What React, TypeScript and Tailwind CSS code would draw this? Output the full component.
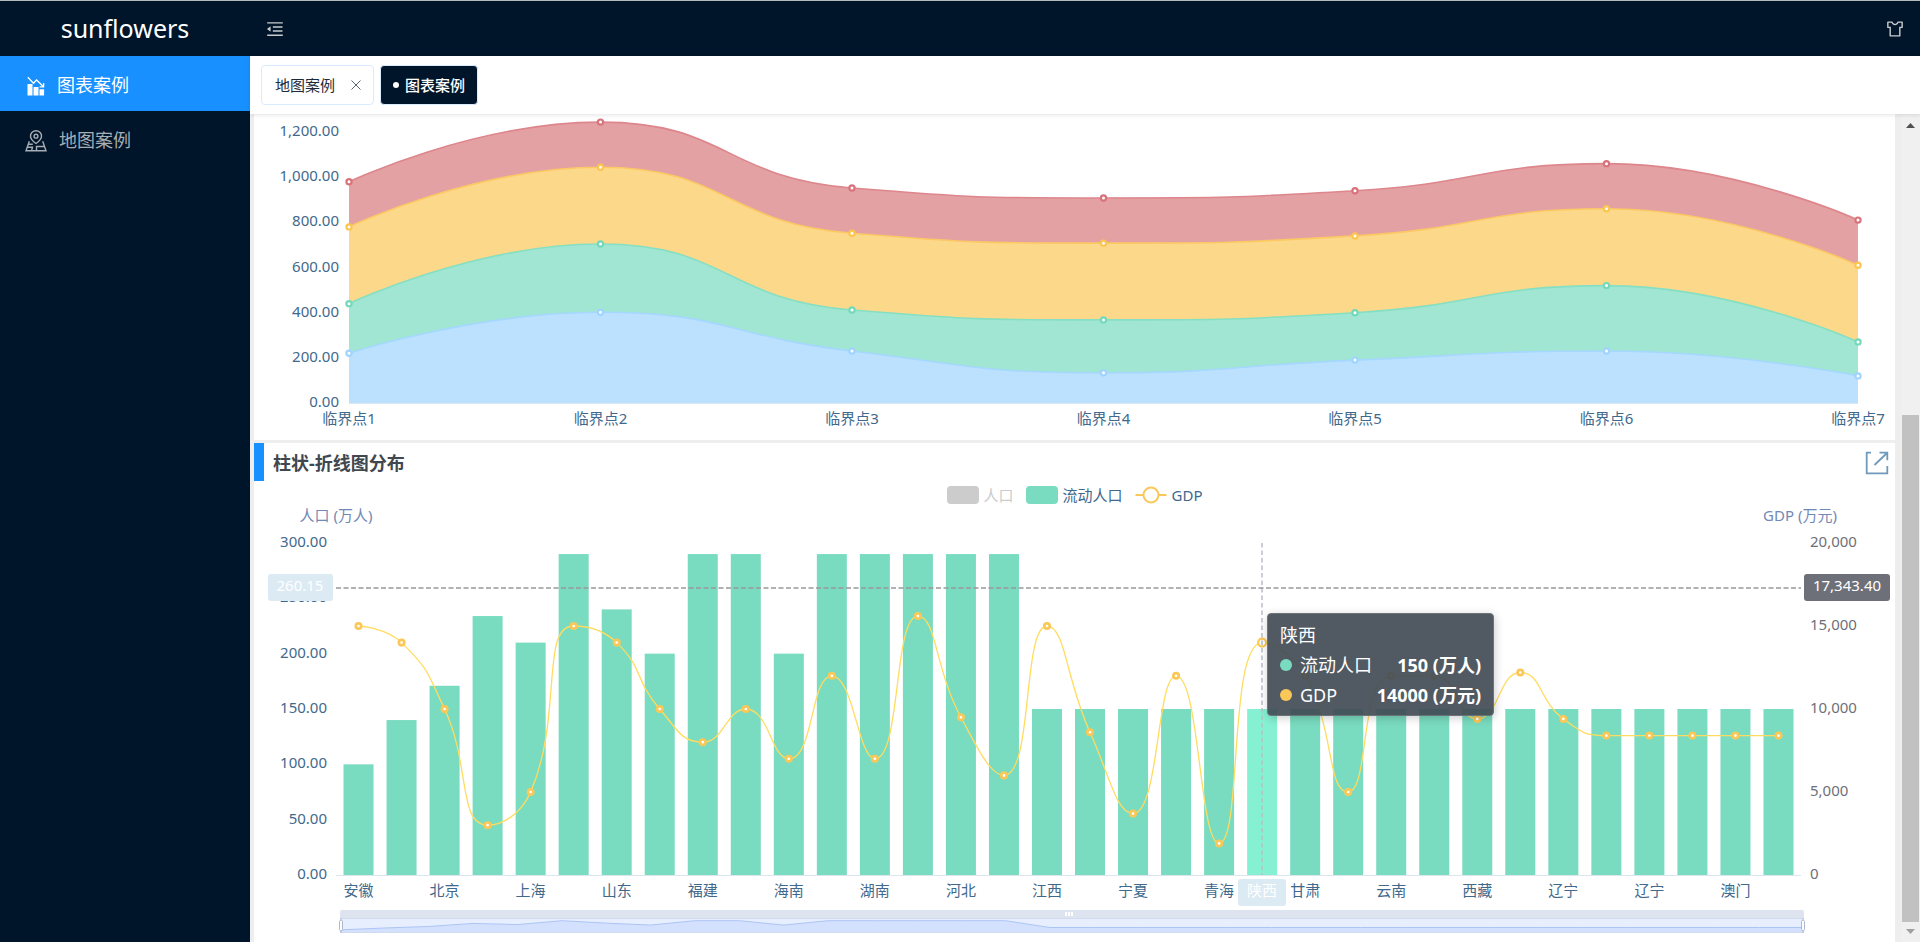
import { useLayoutEffect, useRef, useState } from 'react';
import type { RefObject } from 'react';
import { AiOutlineMenuFold, AiOutlineSkin } from 'react-icons/ai';

type Point = { x: number; y: number };

function useWidth(initial: number): [RefObject<HTMLDivElement | null>, number] {
  const ref = useRef<HTMLDivElement>(null);
  const [width, setWidth] = useState(initial);
  useLayoutEffect(() => {
    const node = ref.current;
    if (!node) return;
    const update = () => setWidth(node.clientWidth);
    update();
    const observer = new ResizeObserver(update);
    observer.observe(node);
    return () => observer.disconnect();
  }, []);
  return [ref, width];
}

const clamp = (v: number, a: number, b: number) => Math.max(Math.min(v, Math.max(a, b)), Math.min(a, b));

// Smooth bezier through all points; control points never overshoot their neighbours.
function smoothPath(pts: Point[], smooth = 0.5): string {
  let d = `M${pts[0].x} ${pts[0].y}`;
  let c0x = pts[0].x;
  let c0y = pts[0].y;
  for (let i = 1; i < pts.length; i++) {
    const prev = pts[i - 1];
    const p = pts[i];
    const next = pts[i + 1];
    let c1x = p.x;
    let c1y = p.y;
    let n0x = p.x;
    let n0y = p.y;
    if (next) {
      const lenPrev = Math.hypot(p.x - prev.x, p.y - prev.y);
      const lenNext = Math.hypot(next.x - p.x, next.y - p.y);
      const ratio = lenNext / (lenNext + lenPrev);
      n0x = clamp(p.x + (next.x - prev.x) * smooth * ratio, next.x, p.x);
      n0y = clamp(p.y + (next.y - prev.y) * smooth * ratio, next.y, p.y);
      c1x = clamp(p.x - ((n0x - p.x) * lenPrev) / lenNext, prev.x, p.x);
      c1y = clamp(p.y - ((n0y - p.y) * lenPrev) / lenNext, prev.y, p.y);
      n0x = p.x + ((p.x - c1x) * lenNext) / lenPrev;
      n0y = p.y + ((p.y - c1y) * lenNext) / lenPrev;
    }
    d += `C${c0x} ${c0y} ${c1x} ${c1y} ${p.x} ${p.y}`;
    c0x = n0x;
    c0y = n0y;
  }
  return d;
}

const areaSeries = [
  { name: 'red', fill: '#e4a1a4', line: '#dd868c', dot: '#d9737b', data: [980, 1244, 952, 908, 940, 1060, 810] },
  { name: 'yellow', fill: '#fcd88b', line: '#fbc964', dot: '#fbc550', data: [780, 1044, 752, 708, 740, 860, 610] },
  { name: 'green', fill: '#a0e6d2', line: '#85dfc3', dot: '#73d9ba', data: [440, 704, 412, 368, 400, 520, 270] },
  { name: 'blue', fill: '#bbe1ff', line: '#a5d7ff', dot: '#9fd4ff', data: [220, 402, 230, 134, 190, 230, 120] },
];
const areaTicks = ['0.00', '200.00', '400.00', '600.00', '800.00', '1,000.00', '1,200.00'];

function AreaChart() {
  const [ref, width] = useWidth(1641);
  const left = 95;
  const right = width - 37;
  const base = 289;
  const unit = 0.2258;
  const step = (right - left) / 6;
  const toPoints = (data: number[]) => data.map((v, i) => ({ x: left + i * step, y: base - v * unit }));
  return (
    <div ref={ref} className="w-full">
      <svg width={width} height={326} className="block" fontSize={15} role="img" aria-label="堆叠面积图">
        {areaSeries.map((s) => (
          <path key={s.name} d={`${smoothPath(toPoints(s.data))}L${right} ${base}L${left} ${base}Z`} fill={s.fill} />
        ))}
        <rect x={left} y={base} width={right - left} height={1} fill="#dce6ef" />
        {areaSeries.map((s) => (
          <path key={s.name} d={smoothPath(toPoints(s.data))} fill="none" stroke={s.line} strokeWidth={1.6} />
        ))}
        {areaSeries.map((s) =>
          toPoints(s.data).map((p, i) => (
            <circle key={`${s.name}-${i}`} cx={p.x} cy={p.y} r={2.6} fill="#fff" stroke={s.dot} strokeWidth={2.2} />
          )),
        )}
        <g fill="#41698c">
          {areaTicks.map((t, i) => (
            <text key={t} x={left - 10} y={base - i * 200 * unit + 4} textAnchor="end">
              {t}
            </text>
          ))}
          {areaSeries[0].data.map((_, i) => (
            <text key={i} x={left + i * step} y={310} textAnchor="middle">
              {`临界点${i + 1}`}
            </text>
          ))}
        </g>
      </svg>
    </div>
  );
}

const population = [
  100, 140, 171, 234, 210, 290, 240, 200, 290, 290, 200, 290, 290, 290, 290, 290, 150, 150, 150, 150, 150, 150, 150,
  150, 150, 150, 150, 150, 150, 150, 150, 150, 150, 150,
];
const gdp = [
  15000, 14000, 10000, 3000, 5000, 15000, 14000, 10000, 8000, 10000, 7000, 12000, 7000, 15600, 9500, 6000, 15000, 8600,
  3700, 12000, 1900, 14000, 12000, 5000, 12000, 12000, 9400, 12200, 9400, 8400, 8400, 8400, 8400, 8400,
];
const provinces: [number, string][] = [
  [0, '安徽'], [2, '北京'], [4, '上海'], [6, '山东'], [8, '福建'], [10, '海南'], [12, '湖南'], [14, '河北'],
  [16, '江西'], [18, '宁夏'], [20, '青海'], [22, '甘肃'], [24, '云南'], [26, '西藏'], [28, '辽宁'], [30, '辽宁'],
  [32, '澳门'],
];
const leftTicks = ['0.00', '50.00', '100.00', '150.00', '200.00', '250.00', '300.00'];
const rightTicks = ['0', '5,000', '10,000', '15,000', '20,000'];
const active = 21;

function BarLineChart() {
  const [ref, width] = useWidth(1641);
  const left = 83;
  const right = width - 95;
  const top = 36;
  const base = 368;
  const band = (right - left) / population.length;
  const cx = (i: number) => left + (i + 0.5) * band;
  const line = gdp.map((v, i) => ({ x: cx(i), y: base - (v / 20000) * (base - top) }));
  const activeX = Math.round(cx(active));

  const zoomLeft = 86;
  const zoomRight = width - 91;
  const zoomStep = (zoomRight - zoomLeft) / (population.length - 1);
  const grip = Math.round((zoomLeft + zoomRight) / 2) - 3;
  const shadow = population
    .map((v, i) => `${zoomLeft + i * zoomStep} ${(420.5 - (v - 150) * 0.0486).toFixed(2)}`)
    .join('L');

  return (
    <div ref={ref} className="relative w-full">
      <svg width={width} height={435} className="block overflow-visible" fontSize={15} role="img" aria-label="柱状-折线图分布">
        {population.map((v, i) => {
          const h = (v / 300) * (base - top);
          return (
            <rect
              key={i}
              x={cx(i) - 15}
              y={base - h}
              width={30}
              height={h}
              fill={i === active ? '#85f0d2' : '#79dbbf'}
            />
          );
        })}
        <rect x={left - 1} y={base} width={right - left + 2} height={1} fill="#dce6ef" />
        <path d={smoothPath(line)} fill="none" stroke="#ffdc60" strokeWidth={1.3} />
        {line.map((p, i) => (
          <circle
            key={i}
            cx={p.x}
            cy={p.y}
            r={i === active ? 4 : 2.7}
            fill="#fff"
            stroke="#fac858"
            strokeWidth={i === active ? 2.2 : 2.7}
          />
        ))}
        <path d={`M${activeX} ${top}V${base}`} stroke="#b9bec9" strokeWidth={1.5} strokeDasharray="4.5 3" />
        <path d={`M${left - 1} 81H${right + 1}`} stroke="#999" strokeWidth={1.6} strokeDasharray="5 2.5" />

        <g fill="#7389b5" textAnchor="middle">
          <text x={left - 1} y={14}>人口 (万人)</text>
          <text x={right} y={14}>GDP (万元)</text>
        </g>
        <g fill="#41698c">
          {leftTicks.map((t, i) => (
            <text key={t} x={left - 10} y={base - (i * (base - top)) / 6 + 4} textAnchor="end">
              {t}
            </text>
          ))}
          {provinces.map(([i, name]) => (
            <text key={i} x={cx(i)} y={389} textAnchor="middle">
              {name}
            </text>
          ))}
        </g>
        <g fill="#6e7079">
          {rightTicks.map((t, i) => (
            <text key={t} x={right + 10} y={base - (i * (base - top)) / 4 + 4}>
              {t}
            </text>
          ))}
        </g>

        <rect x={left - 69} y={67} width={65} height={27} rx={3} fill="#dceaf3" />
        <rect x={right + 4} y={67} width={86} height={27} rx={3} fill="#6e7079" />
        <rect x={activeX - 24} y={372} width={48} height={27} rx={3} fill="#dceaf3" />
        <g fill="#fff" textAnchor="middle">
          <text x={left - 37} y={84}>260.15</text>
          <text x={right + 47} y={84}>17,343.40</text>
          <text x={activeX} y={389}>陕西</text>
        </g>

        <rect x={zoomLeft} y={403} width={zoomRight - zoomLeft} height={9} rx={2} fill="#dde4f0" />
        <rect x={zoomLeft} y={411} width={zoomRight - zoomLeft} height={15} fill="#e7eefe" />
        <path d={`M${shadow}V426H${zoomLeft}Z`} fill="#d3e0fe" />
        <path d={`M${shadow}`} fill="none" stroke="#adc5f5" strokeWidth={1} />
        <path d={`M${zoomLeft} 411.5H${zoomRight}M${zoomLeft} 425.5H${zoomRight}`} stroke="#d0dbee" />
        <path d={`M${grip - 3} 405v4m3 -4v4m3 -4v4`} stroke="#fff" strokeWidth={2} />
        {[zoomLeft + 1, zoomRight - 1].map((x) => (
          <g key={x} stroke="#acb8d1" fill="#fff">
            <path d={`M${x} 411V426`} />
            <rect x={x - 1.5} y={413.5} width={3} height={10} rx={1} />
          </g>
        ))}
      </svg>

      <div
        className="absolute top-[106px] w-[227px] rounded border border-[#6b737b] bg-[rgba(64,74,83,0.91)] px-3 pt-1.5 pb-[5px] text-[18px] leading-[30px] text-white shadow-[1px_2px_10px_rgba(0,0,0,0.2)]"
        style={{ left: activeX + 5 }}
      >
        <div>陕西</div>
        <div className="flex items-center">
          <span className="mr-2 h-3 w-3 rounded-full bg-[#79dbbf]" />
          <span>流动人口</span>
          <span className="ml-auto font-bold">150 (万人)</span>
        </div>
        <div className="flex items-center">
          <span className="mr-2 h-3 w-3 rounded-full bg-[#fac858]" />
          <span>GDP</span>
          <span className="ml-auto font-bold">14000 (万元)</span>
        </div>
      </div>
    </div>
  );
}

function ChartMenuIcon() {
  return (
    <svg width="18" height="20" viewBox="0 0 18 20" fill="none" stroke="currentColor" aria-hidden="true">
      <path d="M.8 1.2 6.5 7.2 9.5 4 16 10.3M16.6 7v3.8h-4" strokeWidth="1.3" />
      <path d="M.5 8h5v11.4h-5zM6.500 11h5v8.400h-5zM12.500 13.200h4.600v6.200h-4.600z" fill="currentColor" stroke="none" />
    </svg>
  );
}

function MapMenuIcon() {
  return (
    <svg width="22" height="22" viewBox="0 0 22 22" fill="none" stroke="currentColor" strokeWidth="1.400" aria-hidden="true">
      <path d="M11 13.500C8 11.400 5.500 9 5.500 6.200a5.500 5.500 0 0 1 11 0c0 2.800-2.500 5.200-5.500 7.300z" />
      <circle cx="11" cy="6.200" r="1.900" />
      <path d="M4.300 11.200 1 20.800h20l-3.300-9.600M3.600 14.300h4.200M2.500 17.300h5l-1 3.500M11.500 20.800v-4.300h7.800" />
    </svg>
  );
}

export default function App() {
  return (
    <div className="flex h-screen min-h-[600px] flex-col bg-[#eee] font-['Noto_Sans','Noto_Sans_CJK_SC',sans-serif]">
      <header className="flex h-14 shrink-0 items-center border-t border-[#b5bcb8] bg-[#001529] text-[#c8ccd0]">
        <h1 className="w-[250px] pb-0.5 text-center text-[25px] leading-8 text-white">sunflowers</h1>
        <button type="button" aria-label="折叠菜单" className="ml-[15px]">
          <AiOutlineMenuFold size={20} />
        </button>
        <button type="button" aria-label="主题" className="mr-[15px] ml-auto">
          <AiOutlineSkin size={20} />
        </button>
      </header>

      <div className="flex min-h-0 flex-1">
        <aside className="w-[250px] shrink-0 bg-[#001529]">
          <nav className="flex flex-col text-[18px]">
            <a href="#charts" className="flex h-[55px] items-center bg-[#1890ff] pt-1 pl-[27px] text-white">
              <ChartMenuIcon />
              <span className="ml-3">图表案例</span>
            </a>
            <a href="#maps" className="flex h-[55px] items-center pt-1 pl-[25px] text-[#a6adb4]">
              <MapMenuIcon />
              <span className="ml-3">地图案例</span>
            </a>
          </nav>
        </aside>

        <div className="flex min-w-0 flex-1 flex-col">
          <div className="z-10 flex h-[58px] shrink-0 items-center gap-1.5 bg-white px-[11px] text-[15px] shadow-[0_1px_4px_rgba(0,21,41,0.12)]">
            <div className="flex h-10 items-center rounded border border-[#d9ecff] pr-[11px] pl-[13px] text-[#1c2b3a]">
              <a href="#maps">地图案例</a>
              <button type="button" aria-label="关闭" className="ml-[15px]">
                <svg width="12" height="12" viewBox="0 0 12 12" stroke="#5c6670" fill="none">
                  <path d="M1.500 1.500l9 9M10.500 1.500l-9 9" />
                </svg>
              </button>
            </div>
            <a
              href="#charts"
              className="flex h-10 items-center gap-1.5 rounded border border-[#d9ecff] bg-[#001529] px-3 font-medium text-white"
            >
              <span className="h-1.5 w-1.5 rounded-full bg-white" />
              图表案例
            </a>
          </div>

          <div className="flex min-h-0 flex-1">
            <main className="flex min-w-0 flex-1 flex-col gap-[3px] overflow-hidden pr-1.5 pl-1">
              <section className="shrink-0 bg-white">
                <AreaChart />
              </section>
              <section className="flex-1 bg-white">
                <div className="flex h-[38px] items-center border-l-10 border-[#1890ff] pt-0.5 pr-1.5 pl-[9px]">
                  <h2 className="text-[18px] font-bold text-[#40474f]">柱状-折线图分布</h2>
                  <button type="button" aria-label="导出" className="ml-auto">
                    <svg width="24" height="24" viewBox="0 0 24 24" fill="none" stroke="#7099bb" strokeWidth="1.800">
                      <path d="M6 1.700H1.700v20.600h20.600V15M14.500 1.700h7.800v7.600M22 2 9.500 14" />
                    </svg>
                  </button>
                </div>
                <div className="flex h-[26px] items-center justify-center gap-3 pt-0.5 text-[15px] leading-[22px] text-[#41698c]">
                  <button type="button" className="flex items-center gap-[5px] text-[#ccc]">
                    <span className="h-[18px] w-8 rounded bg-[#ccc]" />
                    人口
                  </button>
                  <button type="button" className="flex items-center gap-[5px]">
                    <span className="h-[18px] w-8 rounded bg-[#79dbbf]" />
                    流动人口
                  </button>
                  <button type="button" className="flex items-center gap-[5px]">
                    <svg width="32" height="18" viewBox="0 0 32 18" stroke="#fac858" strokeWidth="2" fill="#fff">
                      <path d="M.5 9h31" />
                      <circle cx="16" cy="9" r="7.500" />
                    </svg>
                    GDP
                  </button>
                </div>
                <BarLineChart />
              </section>
            </main>

            <div className="flex w-[19px] shrink-0 flex-col items-center bg-[#f0f0f0] text-[#505050]" aria-hidden="true">
              <svg width="9" height="5" viewBox="0 0 9 5" className="mt-[9px] mb-[9px] shrink-0">
                <path d="M4.500 0 9 5H0z" fill="#505050" />
              </svg>
              <div className="flex min-h-0 w-full flex-1 flex-col items-center">
                <div className="basis-[35.400%]" />
                <div className="w-[17px] flex-1 bg-[#c1c1c1]" />
              </div>
              <svg width="9" height="5" viewBox="0 0 9 5" className="mt-[7px] mb-2 shrink-0">
                <path d="M4.500 5 9 0H0z" fill="#a0a0a0" />
              </svg>
            </div>
          </div>
        </div>
      </div>
    </div>
  );
}
